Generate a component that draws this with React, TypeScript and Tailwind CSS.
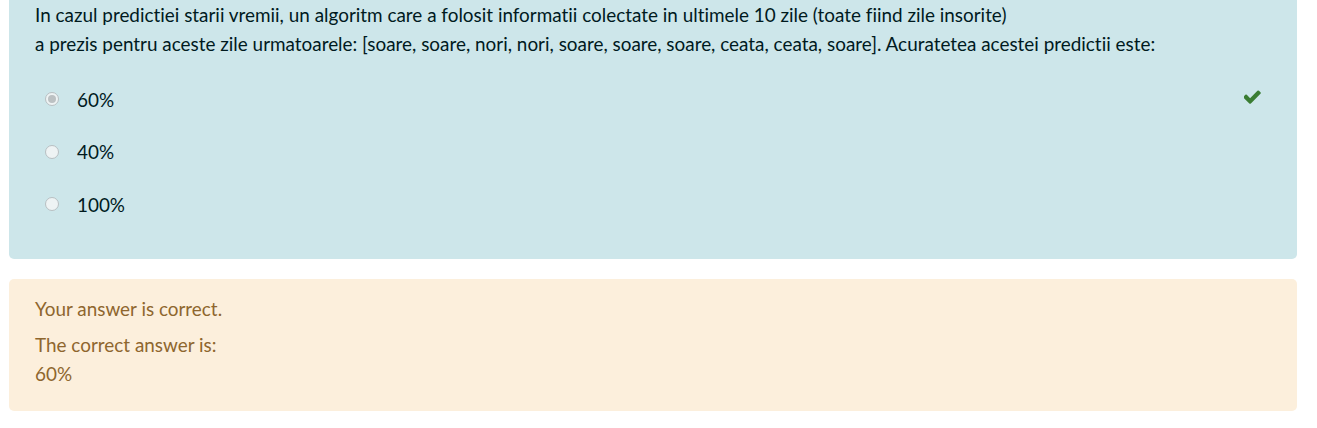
import React from 'react';

const options = [
  { label: '60%', checked: true },
  { label: '40%', checked: false },
  { label: '100%', checked: false }
];

const Radio = ({ checked }: { checked: boolean }) => (
  <span className="flex h-[14px] w-[14px] items-center justify-center rounded-full border border-[#b8bfc2] bg-[#eef3f4]">
    {checked && <span className="h-[8px] w-[8px] rounded-full bg-[#bcc1c3]" />}
  </span>
);

const CheckIcon = () => (
  <svg viewBox="170 290 1520 1250" className="h-[14px] w-[17px]" fill="#3a7d33">
    <path d="M1671 566q0 40-28 68l-724 724-136 136q-28 28-68 28t-68-28l-136-136-362-362q-28-28-28-68t28-68l136-136q28-28 68-28t68 28l294 295 656-657q28-28 68-28t68 28l136 136q28 28 28 68z" />
  </svg>
);

export default function App() {
  return (
    <div className="h-[428px] w-full bg-white font-['Lato',sans-serif] text-[18.9px] leading-[29px] [font-variant-ligatures:none]">
      <div className="ml-[9px] w-[1288px] rounded-b-[5px] bg-[#cde6ea] pb-[28px] pl-[26px] pr-[36px] text-[#001a1e]">
        <div className="mb-[15px]">
          <div>In cazul predictiei starii vremii, un algoritm care a folosit informatii colectate in ultimele 10 zile (toate fiind zile insorite)</div>
          <div>a prezis pentru aceste zile urmatoarele: [soare, soare, nori, nori, soare, soare, soare, ceata, ceata, soare]. Acuratetea acestei predictii este:</div>
        </div>
        {options.map(o => (
          <div key={o.label} className="flex h-[52.5px] items-center">
            <div className="flex items-center pl-[10px]">
              <Radio checked={o.checked} />
              <span className="ml-[18px]">{o.label}</span>
            </div>
            {o.checked && <div className="ml-auto mt-[-5px]"><CheckIcon /></div>}
          </div>
        ))}
      </div>
      <div className="ml-[9px] mt-[20px] h-[132px] w-[1288px] rounded-[5px] bg-[#fcefdc] pl-[26px] pt-[15px] text-[#8e662e]">
        <div>Your answer is correct.</div>
        <div className="mt-[7px]">
          The correct answer is:
          <br />
          60%
        </div>
      </div>
    </div>
  );
}
